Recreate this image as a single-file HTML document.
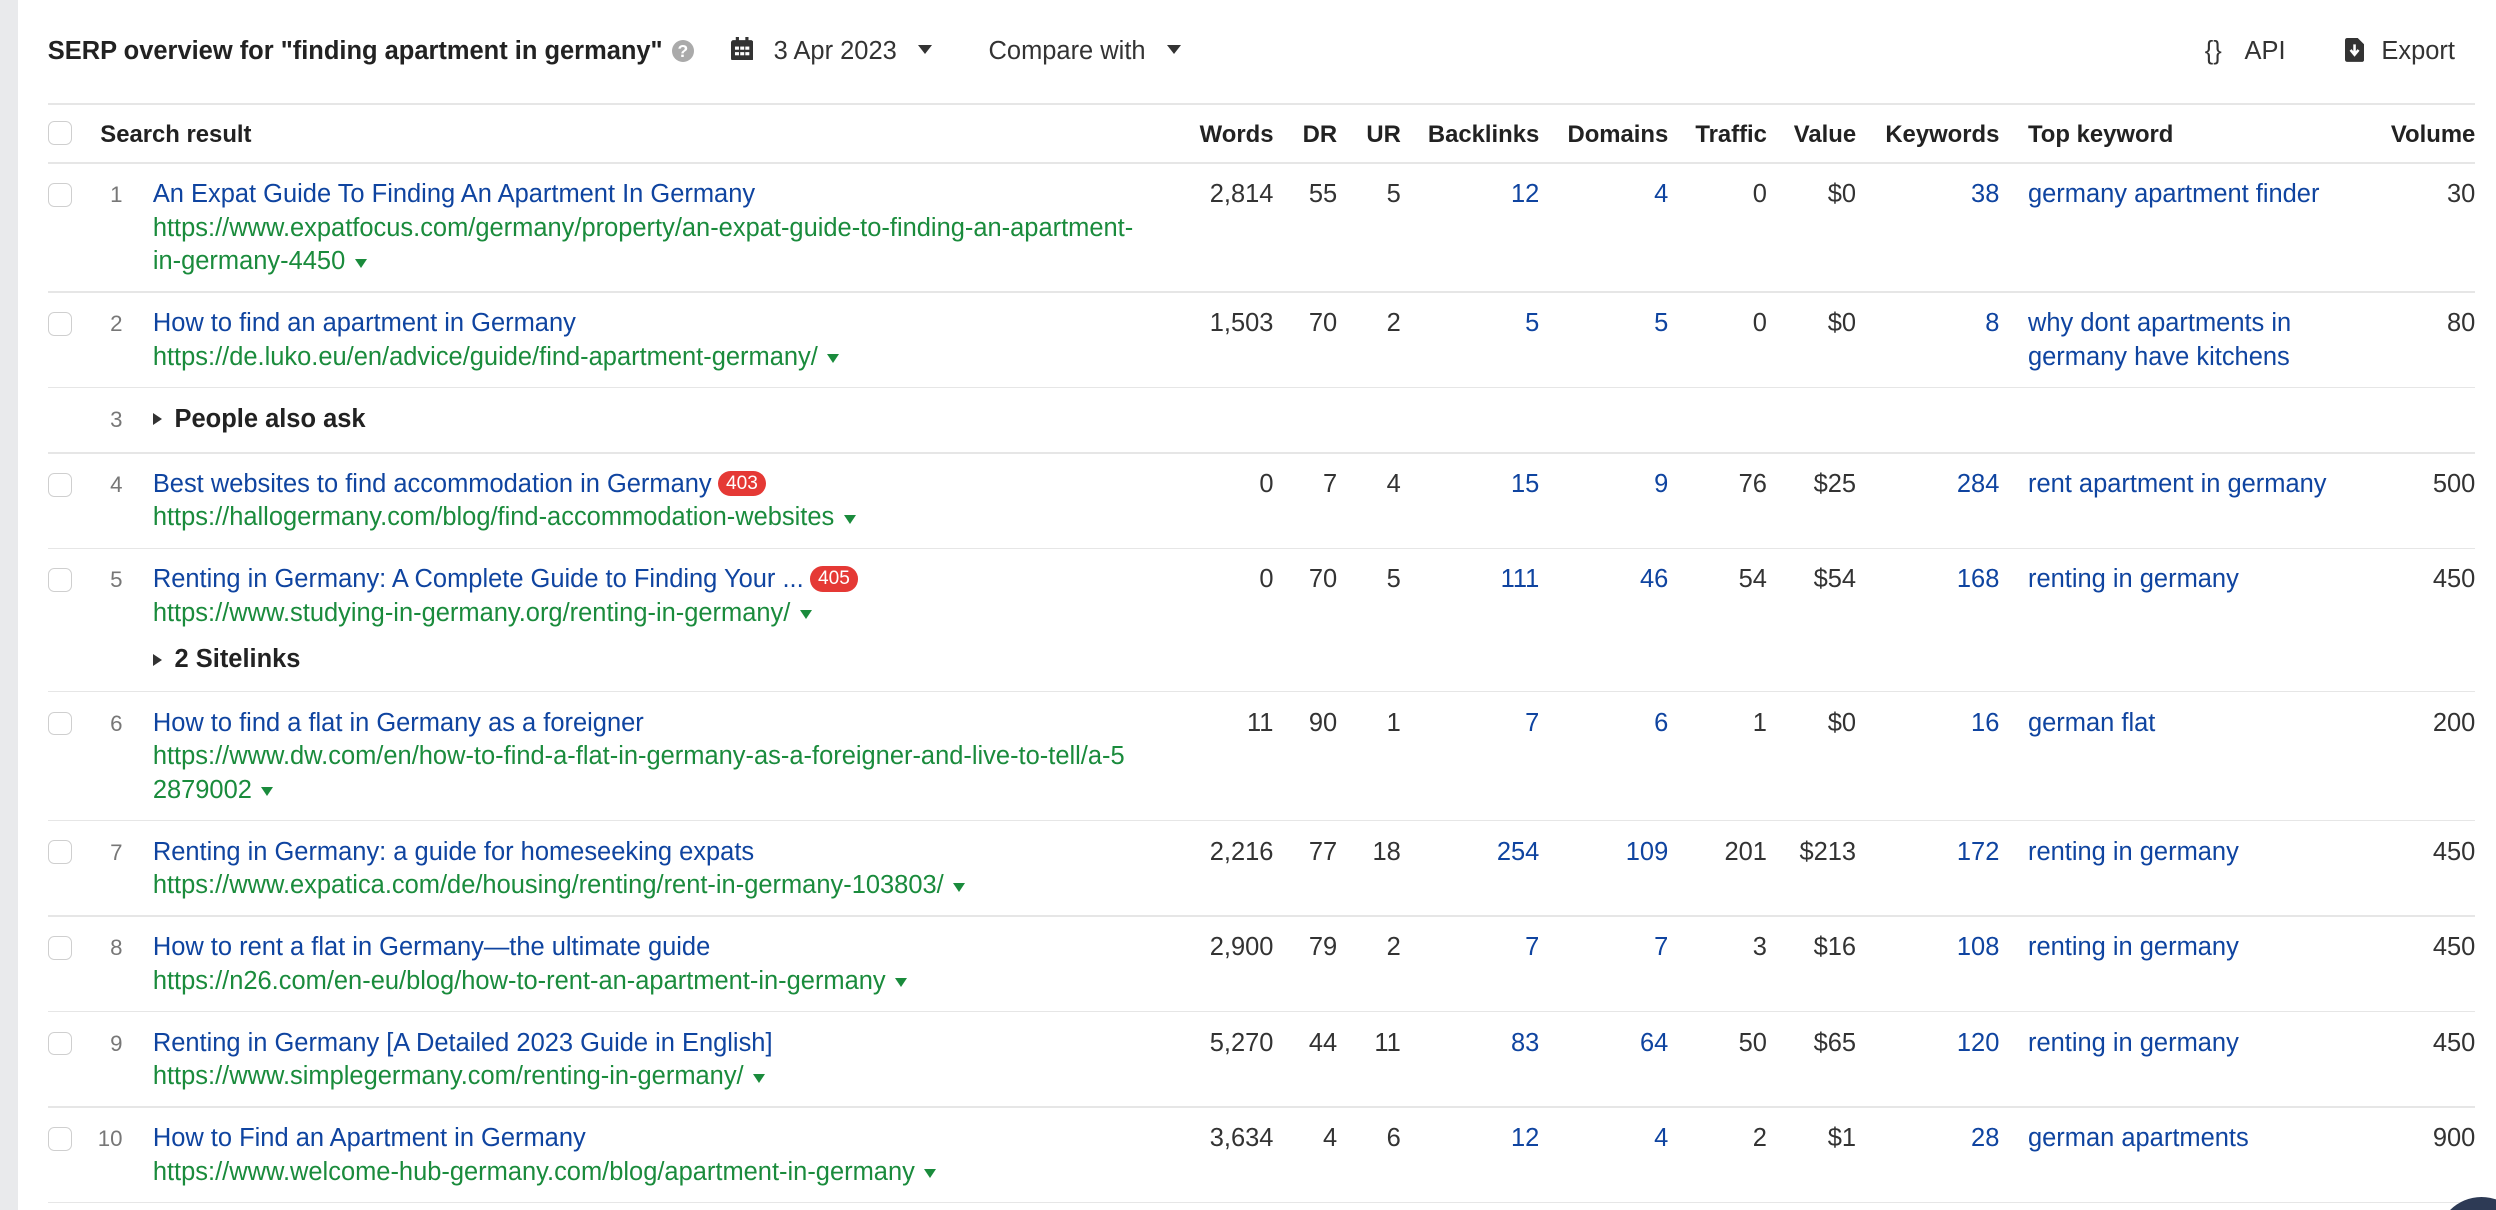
<!DOCTYPE html>
<html><head><meta charset="utf-8"><style>
*{margin:0;padding:0;box-sizing:border-box}
html,body{width:2496px;height:1210px;overflow:hidden;background:#fff}
#w{zoom:1.59184;width:1568px;height:760px;position:relative;font-family:"Liberation Sans",Arial,sans-serif;font-size:16px;color:#333;line-height:21px;overflow:hidden}
.side{position:absolute;left:0;top:0;width:11px;height:760px;background:#e9eaec}
.a{position:absolute;white-space:nowrap}
.b{font-weight:bold;color:#222}
.h{font-size:15px}
.hl{position:absolute;left:30px;width:1525px;height:1px;background:#e6e6e6}
.cb{position:absolute;left:30px;width:15px;height:15px;border:1px solid #cfcfcf;border-radius:4px;background:#fff}
.n{position:absolute;width:20px;text-align:right;left:57px;color:#777;font-size:14px}
.t{position:absolute;left:96px;color:#0f44a0}
.u{position:absolute;left:96px;color:#1a8b3c}
.r{position:absolute;text-align:right}
.lk{color:#0f44a0}
.tri{display:inline-block;width:0;height:0;border-left:4px solid transparent;border-right:4px solid transparent;border-top:6px solid #1a8b3c;margin-left:6px;vertical-align:1px}
.trd{display:inline-block;width:0;height:0;border-left:5px solid transparent;border-right:5px solid transparent;border-top:6px solid #333;vertical-align:3px}
.trr{display:inline-block;width:0;height:0;border-top:4px solid transparent;border-bottom:4px solid transparent;border-left:6px solid #333;margin-right:8px;vertical-align:1px}
.bd{display:inline-block;background:#e53935;color:#fff;font-size:12px;line-height:16px;height:16px;padding:0 5px;border-radius:8px;margin-left:4px;vertical-align:2px}
</style></head><body><div id="w">
<div class="side"></div>
<div class="a b" style="left:30px;top:22px">SERP overview for "finding apartment in germany"</div>
<div class="a" style="left:422px;top:25px;width:14px;height:14px;border-radius:7px;background:#aaa;color:#fff;font-size:11px;line-height:14px;text-align:center;font-weight:bold">?</div>
<svg class="a" style="left:459px;top:23px" width="14" height="15" viewBox="0 0 14 15"><rect x="0" y="2" width="14" height="13" rx="1.5" fill="#333"/><rect x="3" y="0" width="2" height="4" fill="#333"/><rect x="9" y="0" width="2" height="4" fill="#333"/><g fill="#fff"><rect x="2.5" y="6" width="2.5" height="2"/><rect x="5.8" y="6" width="2.5" height="2"/><rect x="9" y="6" width="2.5" height="2"/><rect x="2.5" y="9.5" width="2.5" height="2"/><rect x="5.8" y="9.5" width="2.5" height="2"/><rect x="9" y="9.5" width="2.5" height="2"/></g></svg>
<div class="a" style="left:486px;top:22px">3 Apr 2023 &nbsp;&nbsp;<span class="trd"></span></div>
<div class="a" style="left:621px;top:22px">Compare with &nbsp;&nbsp;<span class="trd"></span></div>
<div class="a" style="left:1385px;top:22px">{}</div>
<div class="a" style="left:1410px;top:22px">API</div>
<svg class="a" style="left:1473px;top:24px" width="12" height="15" viewBox="0 0 12 15"><path d="M0 1.5Q0 0 1.5 0H8L12 4V13.5Q12 15 10.5 15H1.5Q0 15 0 13.5Z" fill="#333"/><path d="M6 4V10M3.5 7.5L6 10.5L8.5 7.5" stroke="#fff" stroke-width="1.6" fill="none"/></svg>
<div class="a" style="left:1496px;top:22px">Export</div>

<div class="hl" style="top:65px"></div>
<div class="cb" style="top:76px"></div>
<div class="a b h" style="left:63px;top:74px">Search result</div>
<div class="a b r h" style="right:768px;top:74px">Words</div>
<div class="a b r h" style="right:728px;top:74px">DR</div>
<div class="a b r h" style="right:688px;top:74px">UR</div>
<div class="a b r h" style="right:601px;top:74px">Backlinks</div>
<div class="a b r h" style="right:520px;top:74px">Domains</div>
<div class="a b r h" style="right:458px;top:74px">Traffic</div>
<div class="a b r h" style="right:402px;top:74px">Value</div>
<div class="a b r h" style="right:312px;top:74px">Keywords</div>
<div class="a b h" style="left:1274px;top:74px">Top keyword</div>
<div class="a b r h" style="right:13px;top:74px">Volume</div>
<div class="hl" style="top:102px"></div>

<div style="position:absolute;left:0;top:102px;width:1568px">
<div class="cb" style="top:13px"></div><div class="n" style="top:10px">1</div>
<div class="t a" style="top:10px">An Expat Guide To Finding An Apartment In Germany</div>
<div class="u a" style="top:31px">https://www.expatfocus.com/germany/property/an-expat-guide-to-finding-an-apartment-<br>in-germany-4450<span class="tri"></span></div>
<div class="a r" style="right:768px;top:10px">2,814</div><div class="a r" style="right:728px;top:10px">55</div><div class="a r" style="right:688px;top:10px">5</div><div class="a r lk" style="right:601px;top:10px">12</div><div class="a r lk" style="right:520px;top:10px">4</div><div class="a r" style="right:458px;top:10px">0</div><div class="a r" style="right:402px;top:10px">$0</div><div class="a r lk" style="right:312px;top:10px">38</div><div class="a lk" style="left:1274px;top:10px">germany apartment finder</div><div class="a r" style="right:13px;top:10px">30</div>
</div>
<div class="hl" style="top:183px"></div>

<div style="position:absolute;left:0;top:183px;width:1568px">
<div class="cb" style="top:13px"></div><div class="n" style="top:10px">2</div>
<div class="t a" style="top:10px">How to find an apartment in Germany</div>
<div class="u a" style="top:31px">https://de.luko.eu/en/advice/guide/find-apartment-germany/<span class="tri"></span></div>
<div class="a r" style="right:768px;top:10px">1,503</div><div class="a r" style="right:728px;top:10px">70</div><div class="a r" style="right:688px;top:10px">2</div><div class="a r lk" style="right:601px;top:10px">5</div><div class="a r lk" style="right:520px;top:10px">5</div><div class="a r" style="right:458px;top:10px">0</div><div class="a r" style="right:402px;top:10px">$0</div><div class="a r lk" style="right:312px;top:10px">8</div><div class="a lk" style="left:1274px;top:10px">why dont apartments in<br>germany have kitchens</div><div class="a r" style="right:13px;top:10px">80</div>
</div>
<div class="hl" style="top:243px"></div>

<div style="position:absolute;left:0;top:243px;width:1568px">
<div class="n" style="top:10px">3</div>
<div class="a b" style="left:96px;top:10px"><span class="trr"></span>People also ask</div>
</div>
<div class="hl" style="top:284px"></div>

<div style="position:absolute;left:0;top:284px;width:1568px">
<div class="cb" style="top:13px"></div><div class="n" style="top:10px">4</div>
<div class="t a" style="top:10px">Best websites to find accommodation in Germany<span class="bd">403</span></div>
<div class="u a" style="top:31px">https://hallogermany.com/blog/find-accommodation-websites<span class="tri"></span></div>
<div class="a r" style="right:768px;top:10px">0</div><div class="a r" style="right:728px;top:10px">7</div><div class="a r" style="right:688px;top:10px">4</div><div class="a r lk" style="right:601px;top:10px">15</div><div class="a r lk" style="right:520px;top:10px">9</div><div class="a r" style="right:458px;top:10px">76</div><div class="a r" style="right:402px;top:10px">$25</div><div class="a r lk" style="right:312px;top:10px">284</div><div class="a lk" style="left:1274px;top:10px">rent apartment in germany</div><div class="a r" style="right:13px;top:10px">500</div>
</div>
<div class="hl" style="top:344px"></div>

<div style="position:absolute;left:0;top:344px;width:1568px">
<div class="cb" style="top:13px"></div><div class="n" style="top:10px">5</div>
<div class="t a" style="top:10px">Renting in Germany: A Complete Guide to Finding Your ...<span class="bd">405</span></div>
<div class="u a" style="top:31px">https://www.studying-in-germany.org/renting-in-germany/<span class="tri"></span></div>
<div class="a b" style="left:96px;top:60px"><span class="trr"></span>2 Sitelinks</div>
<div class="a r" style="right:768px;top:10px">0</div><div class="a r" style="right:728px;top:10px">70</div><div class="a r" style="right:688px;top:10px">5</div><div class="a r lk" style="right:601px;top:10px">111</div><div class="a r lk" style="right:520px;top:10px">46</div><div class="a r" style="right:458px;top:10px">54</div><div class="a r" style="right:402px;top:10px">$54</div><div class="a r lk" style="right:312px;top:10px">168</div><div class="a lk" style="left:1274px;top:10px">renting in germany</div><div class="a r" style="right:13px;top:10px">450</div>
</div>
<div class="hl" style="top:434px"></div>

<div style="position:absolute;left:0;top:434px;width:1568px">
<div class="cb" style="top:13px"></div><div class="n" style="top:10px">6</div>
<div class="t a" style="top:10px">How to find a flat in Germany as a foreigner</div>
<div class="u a" style="top:31px">https://www.dw.com/en/how-to-find-a-flat-in-germany-as-a-foreigner-and-live-to-tell/a-5<br>2879002<span class="tri"></span></div>
<div class="a r" style="right:768px;top:10px">11</div><div class="a r" style="right:728px;top:10px">90</div><div class="a r" style="right:688px;top:10px">1</div><div class="a r lk" style="right:601px;top:10px">7</div><div class="a r lk" style="right:520px;top:10px">6</div><div class="a r" style="right:458px;top:10px">1</div><div class="a r" style="right:402px;top:10px">$0</div><div class="a r lk" style="right:312px;top:10px">16</div><div class="a lk" style="left:1274px;top:10px">german flat</div><div class="a r" style="right:13px;top:10px">200</div>
</div>
<div class="hl" style="top:515px"></div>

<div style="position:absolute;left:0;top:515px;width:1568px">
<div class="cb" style="top:13px"></div><div class="n" style="top:10px">7</div>
<div class="t a" style="top:10px">Renting in Germany: a guide for homeseeking expats</div>
<div class="u a" style="top:31px">https://www.expatica.com/de/housing/renting/rent-in-germany-103803/<span class="tri"></span></div>
<div class="a r" style="right:768px;top:10px">2,216</div><div class="a r" style="right:728px;top:10px">77</div><div class="a r" style="right:688px;top:10px">18</div><div class="a r lk" style="right:601px;top:10px">254</div><div class="a r lk" style="right:520px;top:10px">109</div><div class="a r" style="right:458px;top:10px">201</div><div class="a r" style="right:402px;top:10px">$213</div><div class="a r lk" style="right:312px;top:10px">172</div><div class="a lk" style="left:1274px;top:10px">renting in germany</div><div class="a r" style="right:13px;top:10px">450</div>
</div>
<div class="hl" style="top:575px"></div>

<div style="position:absolute;left:0;top:575px;width:1568px">
<div class="cb" style="top:13px"></div><div class="n" style="top:10px">8</div>
<div class="t a" style="top:10px">How to rent a flat in Germany—the ultimate guide</div>
<div class="u a" style="top:31px">https://n26.com/en-eu/blog/how-to-rent-an-apartment-in-germany<span class="tri"></span></div>
<div class="a r" style="right:768px;top:10px">2,900</div><div class="a r" style="right:728px;top:10px">79</div><div class="a r" style="right:688px;top:10px">2</div><div class="a r lk" style="right:601px;top:10px">7</div><div class="a r lk" style="right:520px;top:10px">7</div><div class="a r" style="right:458px;top:10px">3</div><div class="a r" style="right:402px;top:10px">$16</div><div class="a r lk" style="right:312px;top:10px">108</div><div class="a lk" style="left:1274px;top:10px">renting in germany</div><div class="a r" style="right:13px;top:10px">450</div>
</div>
<div class="hl" style="top:635px"></div>

<div style="position:absolute;left:0;top:635px;width:1568px">
<div class="cb" style="top:13px"></div><div class="n" style="top:10px">9</div>
<div class="t a" style="top:10px">Renting in Germany [A Detailed 2023 Guide in English]</div>
<div class="u a" style="top:31px">https://www.simplegermany.com/renting-in-germany/<span class="tri"></span></div>
<div class="a r" style="right:768px;top:10px">5,270</div><div class="a r" style="right:728px;top:10px">44</div><div class="a r" style="right:688px;top:10px">11</div><div class="a r lk" style="right:601px;top:10px">83</div><div class="a r lk" style="right:520px;top:10px">64</div><div class="a r" style="right:458px;top:10px">50</div><div class="a r" style="right:402px;top:10px">$65</div><div class="a r lk" style="right:312px;top:10px">120</div><div class="a lk" style="left:1274px;top:10px">renting in germany</div><div class="a r" style="right:13px;top:10px">450</div>
</div>
<div class="hl" style="top:695px"></div>

<div style="position:absolute;left:0;top:695px;width:1568px;height:60px">
<div class="cb" style="top:13px"></div><div class="n" style="top:10px">10</div>
<div class="t a" style="top:10px">How to Find an Apartment in Germany</div>
<div class="u a" style="top:31px">https://www.welcome-hub-germany.com/blog/apartment-in-germany<span class="tri"></span></div>
<div class="a r" style="right:768px;top:10px">3,634</div><div class="a r" style="right:728px;top:10px">4</div><div class="a r" style="right:688px;top:10px">6</div><div class="a r lk" style="right:601px;top:10px">12</div><div class="a r lk" style="right:520px;top:10px">4</div><div class="a r" style="right:458px;top:10px">2</div><div class="a r" style="right:402px;top:10px">$1</div><div class="a r lk" style="right:312px;top:10px">28</div><div class="a lk" style="left:1274px;top:10px">german apartments</div><div class="a r" style="right:13px;top:10px">900</div>
</div>
<div class="hl" style="top:755px"></div>
<div style="position:absolute;left:1531px;top:752px;width:37px;height:8px;overflow:hidden"><div style="width:56px;height:56px;border-radius:28px;background:#2d3a55"></div></div>
</div></body></html>
